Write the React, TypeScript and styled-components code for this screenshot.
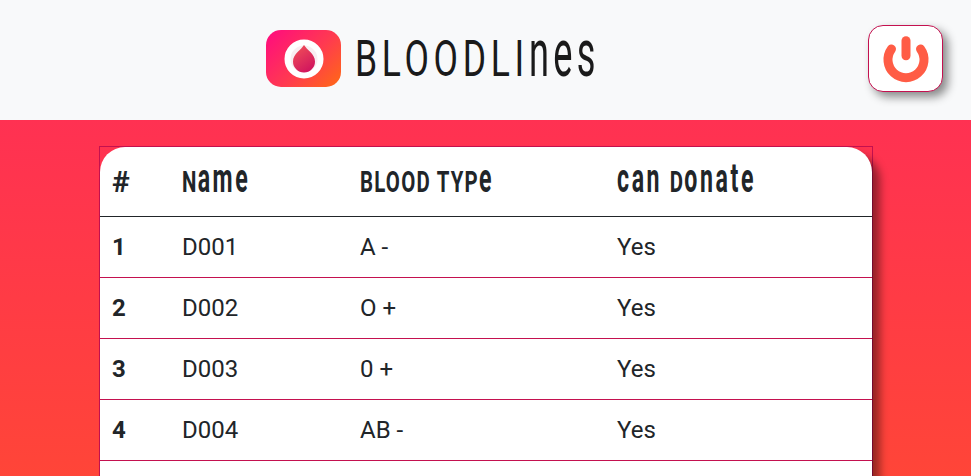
import React from "react";
import styled, { createGlobalStyle } from "styled-components";

const Global = createGlobalStyle`
  html, body { margin: 0; padding: 0; height: 476px; overflow: hidden; background: #f8f9fa; }
  body { font-family: Roboto, "Liberation Sans", sans-serif; color: #212529; }
`;
const TopBar = styled.header`
  height: 120px; box-sizing: border-box; background: #f8f9fa;
  display: flex; align-items: center; justify-content: space-between;
  padding: 0 28px 3px 266px;
`;
const Brand = styled.div`display: flex; align-items: center; gap: 14px;`;
const LogoBox = styled.div`
  width: 75px; height: 57px; border-radius: 15px;
  background: linear-gradient(135deg, #ff0a80 0%, #ff3a50 55%, #ff6a14 100%);
  display: flex; align-items: center; justify-content: center;
`;
const Wordmark = styled.span`
  display: block; width: 240px; height: 56px; white-space: nowrap;
  font-family: Roboto, sans-serif; font-weight: 400;
  font-size: 50px; line-height: 56px; letter-spacing: 6.6px; color: #1a1a1a;
  transform: scaleX(.71); transform-origin: left center;
`;
const WordmarkTall = styled.span`
  display: inline-block; font-size: 67px; line-height: 40px; letter-spacing: 8px;
  transform: scaleX(.76); transform-origin: left center;
`;
const PowerButton = styled.button`
  width: 75px; height: 67px; box-sizing: border-box; padding: 0;
  background: #fff; border: 1px solid #c4114f; border-radius: 15px;
  box-shadow: 5px 5px 10px rgba(0,0,0,.45);
  display: flex; align-items: center; justify-content: center;
`;
const Main = styled.main`
  height: 356px; box-sizing: border-box; padding: 26px 98px 0 99px;
  background: linear-gradient(180deg, #ff3152 0%, #ff4538 100%);
  overflow: hidden;
`;
const Frame = styled.div`border: 1px solid #c4114f; border-bottom: 0;`;
const Table = styled.table`
  width: 100%; border-collapse: separate; border-spacing: 0; table-layout: fixed;
  background: #fff; border-radius: 25px 25px 0 0;
  box-shadow: 8px 8px 9px rgba(0,0,0,.42);
`;
const HeadCell = styled.th`
  padding: 12px; text-align: left; font-weight: 700;
  font-size: 30px; line-height: 45px; color: #212529;
  border-bottom: 1px solid #212529; white-space: nowrap;
`;
const HeadText = styled.span<{ $scale?: number }>`
  display: inline-block; letter-spacing: 1.8px;
  transform: scaleX(${(p) => p.$scale ?? 0.68}); transform-origin: left center;
`;
const HeadTall = styled.span<{ $pull?: number }>`
  display: inline-block; font-size: 40px; line-height: 30px; letter-spacing: 4.5px;
  transform: scaleX(.85); transform-origin: left center;
  margin-right: ${(p) => p.$pull ?? 0}px;
`;
const IndexCell = styled.th`
  padding: 12px; text-align: left; font-size: 24px; line-height: 36px; font-weight: 700;
  border-bottom: 1px solid #c4114f; height: 36px;
`;
const Cell = styled.td`
  padding: 12px; font-size: 24px; line-height: 36px; font-weight: 400;
  border-bottom: 1px solid #c4114f;
`;
const rows = [
  ["1", "D001", "A -", "Yes"],
  ["2", "D002", "O +", "Yes"],
  ["3", "D003", "0 +", "Yes"],
  ["4", "D004", "AB -", "Yes"],
  ["", "", "", ""],
];
export default function App() {
  return (
    <>
      <Global />
      <TopBar>
        <Brand>
          <LogoBox>
            <svg width="40" height="40" viewBox="0 0 40 40" aria-hidden="true">
              <defs>
                <linearGradient id="dropFill" x1="0.2" y1="0.1" x2="0.7" y2="1">
                  <stop offset="0" stopColor="#ee4a58" />
                  <stop offset="1" stopColor="#d0145e" />
                </linearGradient>
              </defs>
              <circle cx="20" cy="20" r="16.500" fill="#f8eef1" stroke="#fff" strokeWidth="6" />
              <path d="M20 6C23 11 31 15 31 22.500a11 11 0 0 1-22 0C9 15 17 11 20 6Z" fill="url(#dropFill)" />
            </svg>
          </LogoBox>
          <Wordmark>BLOODLI<WordmarkTall>nes</WordmarkTall></Wordmark>
        </Brand>
        <PowerButton aria-label="Power">
          <svg width="50" height="50" viewBox="0 0 50 50" fill="none" stroke="#ff5c45" strokeWidth="9" strokeLinecap="round" aria-hidden="true">
            <path d="M25 6.700V21.800" />
            <path d="M10.500 15A18 18 0 1 0 39.500 15" />
          </svg>
        </PowerButton>
      </TopBar>
      <Main>
        <Frame>
          <Table>
            <colgroup>
              <col style={{ width: 70 }} />
              <col style={{ width: 178 }} />
              <col style={{ width: 257 }} />
              <col />
            </colgroup>
            <thead>
              <tr>
                <HeadCell><HeadText $scale={1}>#</HeadText></HeadCell>
                <HeadCell><HeadText>N<HeadTall>ame</HeadTall></HeadText></HeadCell>
                <HeadCell><HeadText>BLOOD TYP<HeadTall>e</HeadTall></HeadText></HeadCell>
                <HeadCell><HeadText><HeadTall $pull={-10}>can</HeadTall> D<HeadTall>onate</HeadTall></HeadText></HeadCell>
              </tr>
            </thead>
            <tbody>
              {rows.map((r, i) => (
                <tr key={i}>
                  <IndexCell>{r[0]}</IndexCell>
                  <Cell>{r[1]}</Cell>
                  <Cell>{r[2]}</Cell>
                  <Cell>{r[3]}</Cell>
                </tr>
              ))}
            </tbody>
          </Table>
        </Frame>
      </Main>
    </>
  );
}
